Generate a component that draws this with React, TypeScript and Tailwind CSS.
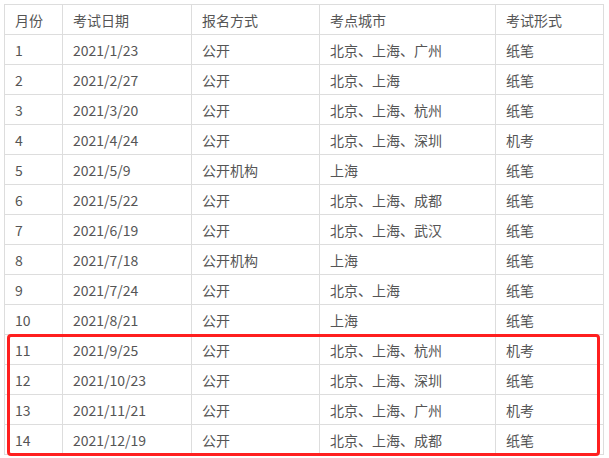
import React from "react";

const rows: [string, string, string, string, string][] = [
  ["1", "2021/1/23", "公开", "北京、上海、广州", "纸笔"],
  ["2", "2021/2/27", "公开", "北京、上海", "纸笔"],
  ["3", "2021/3/20", "公开", "北京、上海、杭州", "纸笔"],
  ["4", "2021/4/24", "公开", "北京、上海、深圳", "机考"],
  ["5", "2021/5/9", "公开机构", "上海", "纸笔"],
  ["6", "2021/5/22", "公开", "北京、上海、成都", "纸笔"],
  ["7", "2021/6/19", "公开", "北京、上海、武汉", "纸笔"],
  ["8", "2021/7/18", "公开机构", "上海", "纸笔"],
  ["9", "2021/7/24", "公开", "北京、上海", "纸笔"],
  ["10", "2021/8/21", "公开", "上海", "纸笔"],
  ["11", "2021/9/25", "公开", "北京、上海、杭州", "机考"],
  ["12", "2021/10/23", "公开", "北京、上海、深圳", "纸笔"],
  ["13", "2021/11/21", "公开", "北京、上海、广州", "机考"],
  ["14", "2021/12/19", "公开", "北京、上海、成都", "纸笔"],
];

const headers = ["月份", "考试日期", "报名方式", "考点城市", "考试形式"];

export default function App() {
  const cell =
    "border border-[#dddddd] h-[30px] pl-[10px] align-middle whitespace-nowrap leading-none";
  return (
    <div
      className="w-[609px] h-[458px] bg-white pl-[4px] pt-[4px] text-[14px] text-[#555555]"
      style={{ fontFamily: '"Microsoft YaHei", "Noto Sans CJK SC", "Noto Sans", sans-serif' }}
    >
      <div className="relative w-[599px]">
        <table className="table-fixed border-collapse w-[599px]">
          <colgroup>
            <col className="w-[58px]" />
            <col className="w-[129px]" />
            <col className="w-[128px]" />
            <col className="w-[176px]" />
            <col className="w-[108px]" />
          </colgroup>
          <thead>
            <tr>
              {headers.map((h) => (
                <td key={h} className={cell + " font-normal text-left"}>
                  {h}
                </td>
              ))}
            </tr>
          </thead>
          <tbody>
            {rows.map((r) => (
              <tr key={r[0]}>
                {r.map((c, i) => (
                  <td key={i} className={cell}>
                    {c}
                  </td>
                ))}
              </tr>
            ))}
          </tbody>
        </table>
        <div className="absolute left-[3px] top-[330px] w-[593px] h-[122px] border-[3px] border-[#ff1f1f] rounded-[4px] pointer-events-none" />
      </div>
    </div>
  );
}
